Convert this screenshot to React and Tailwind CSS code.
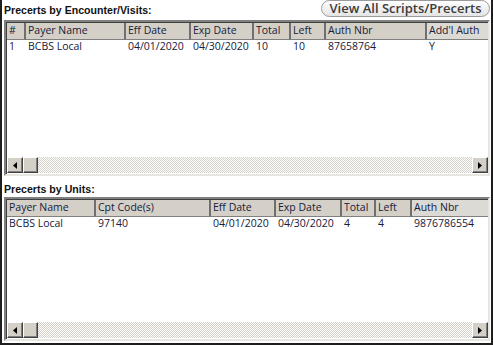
const font = { fontFamily: '"Open Sans", "Liberation Sans", Arial, sans-serif' };
const titleFont = { fontFamily: '"Liberation Sans", Arial, sans-serif' };

const encCols = [
  { label: "#", w: 19 },
  { label: "Payer Name", w: 100 },
  { label: "Eff Date", w: 65 },
  { label: "Exp Date", w: 63 },
  { label: "Total", w: 37 },
  { label: "Left", w: 35 },
  { label: "Auth Nbr", w: 101 },
  { label: "Add'l Auth", w: 60, last: true },
];
const encRows = [["1", "BCBS Local", "04/01/2020", "04/30/2020", "10", "10", "87658764", "Y"]];

const unitCols = [
  { label: "Payer Name", w: 89 },
  { label: "Cpt Code(s)", w: 115 },
  { label: "Eff Date", w: 65 },
  { label: "Exp Date", w: 66 },
  { label: "Total", w: 34 },
  { label: "Left", w: 36 },
  { label: "Auth Nbr", w: 75, last: true },
];
const unitRows = [["BCBS Local", "97140", "04/01/2020", "04/30/2020", "4", "4", "9876786554"]];

function Arrow({ dir }) {
  return (
    <div className="w-4 h-4 shrink-0 bg-[#d4d0c8] border-t border-l border-t-white border-l-white border-r border-b border-r-[#404040] border-b-[#404040] shadow-[inset_-1px_-1px_0_#808080] flex items-center justify-center">
      <svg width="4" height="7" viewBox="0 0 4 7">
        {dir === "left" ? <path d="M4 0 L0 3.5 L4 7 Z" fill="#000" /> : <path d="M0 0 L4 3.5 L0 7 Z" fill="#000" />}
      </svg>
    </div>
  );
}

function Grid({ cols, rows, height }) {
  return (
    <div
      className="ml-[2px] mr-[1px] border-2 border-t-[#808080] border-l-[#808080] border-r-[#e8e6e0] border-b-[#e8e6e0] shadow-[inset_1px_1px_0_#404040] bg-white flex flex-col"
      style={{ height }}
    >
      <div className="flex h-[17px] shrink-0 pl-px pt-px">
        {cols.map((c, i) => (
          <div
            key={i}
            className={
              "h-[17px] shrink-0 flex items-center pl-[2px] text-[10.5px] text-[#16203a] whitespace-nowrap overflow-hidden border-b border-[#808080] " +
              (c.last ? "flex-1 bg-[#dcdad5]" : "bg-[#d4d0c8] border-r-2 border-r-[#6f6f6f]")
            }
            style={c.last ? undefined : { width: c.w }}
          >
            {c.label}
          </div>
        ))}
      </div>
      <div className="flex-1 pl-px">
        {rows.map((r, ri) => (
          <div key={ri} className="flex h-[16px] items-center">
            {r.map((v, i) => (
              <div
                key={i}
                className={"shrink-0 pl-[2px] text-[10.5px] text-[#16203a] whitespace-nowrap " + (cols[i].last ? "flex-1" : "")}
                style={cols[i].last ? undefined : { width: cols[i].w }}
              >
                {v}
              </div>
            ))}
          </div>
        ))}
      </div>
      <div className="flex h-4 shrink-0 pl-px mb-px">
        <Arrow dir="left" />
        <div className="w-[15px] h-4 shrink-0 bg-[#d4d0c8] border-t border-l border-t-white border-l-white border-r border-b border-r-[#404040] border-b-[#404040] shadow-[inset_-1px_-1px_0_#808080]" />
        <div className="flex-1 bg-[repeating-conic-gradient(#d4d0c8_0_25%,#ffffff_0_50%)] [background-size:2px_2px]" />
        <Arrow dir="right" />
      </div>
    </div>
  );
}

export default function App() {
  return (
    <div className="w-[493px] h-[345px] bg-white border-l-2 border-r-2 border-b-2 border-[#1e1e1e] flex flex-col" style={font}>
      <div className="h-[20px] flex items-start justify-between pl-[2px] pr-[1px]">
        <div className="mt-[5px] text-[10.6px] font-bold text-[#111] leading-none" style={titleFont}>Precerts by Encounter/Visits:</div>
        <button className="h-[17px] w-[169px] rounded-full border border-[#9a9a9a] bg-gradient-to-b from-white to-[#e4e4e4] text-[13px] leading-none text-[#3c3c3c] flex items-center justify-center" style={{ fontFamily: '"Open Sans", sans-serif', fontWeight: 600 }}>
          View All Scripts/Precerts
        </button>
      </div>
      <Grid cols={encCols} rows={encRows} height={156} />
      <div className="h-[21px] pl-[2px] pt-[8px] text-[10.6px] font-bold text-[#111] leading-none" style={titleFont}>Precerts by Units:</div>
      <Grid cols={unitCols} rows={unitRows} height={144} />
    </div>
  );
}
